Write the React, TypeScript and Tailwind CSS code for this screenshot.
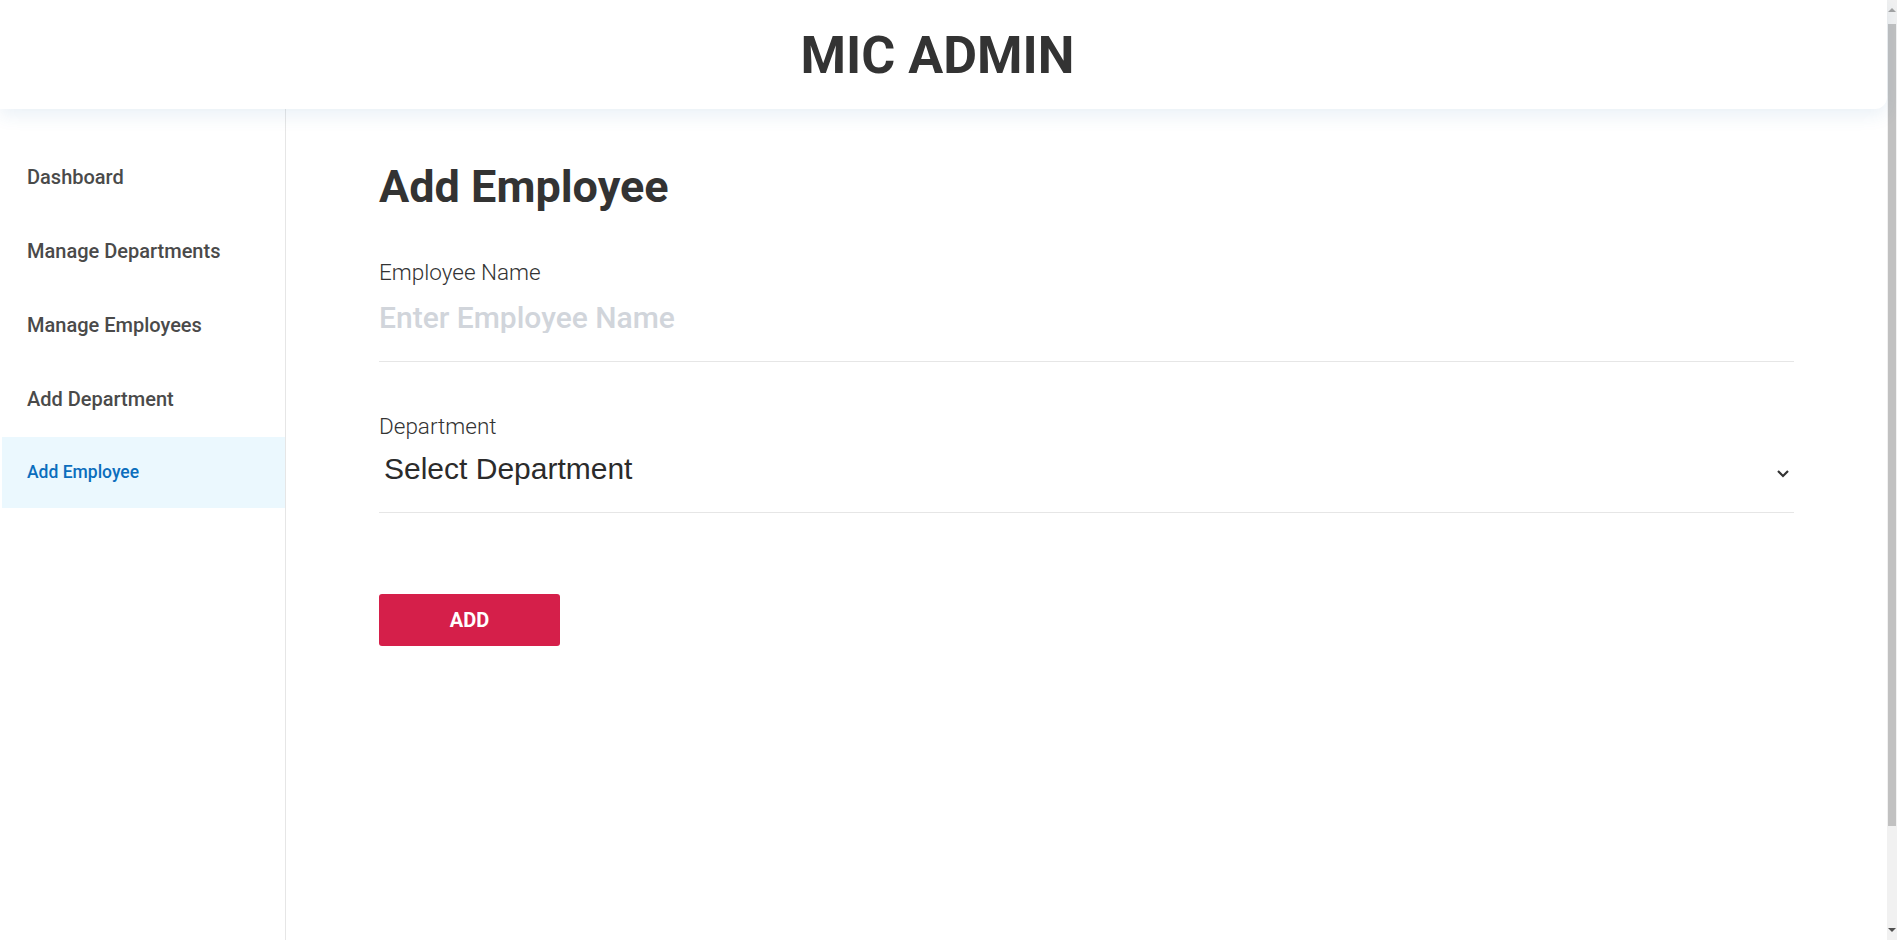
import React from "react";

const navItems = [
  { label: "Dashboard", active: false },
  { label: "Manage Departments", active: false },
  { label: "Manage Employees", active: false },
  { label: "Add Department", active: false },
  { label: "Add Employee", active: true },
];

export default function App() {
  return (
    <div className="flex h-[940px] w-full overflow-hidden bg-white font-['Roboto',sans-serif]">
      <div className="flex min-w-0 flex-1 flex-col">
        <header className="relative z-10 flex h-[109px] shrink-0 items-center justify-center rounded-br-[12px] bg-white pr-[12px] pt-[2px] shadow-[0_6px_18px_rgba(40,110,170,0.10)]">
          <h1 className="text-[52px] font-bold leading-none text-[#333333]">MIC ADMIN</h1>
        </header>
        <div className="flex min-h-0 flex-1">
          <aside className="w-[286px] shrink-0 border-r border-[#e6e6e6] pt-[32px]">
            {navItems.map((item) => (
              <div
                key={item.label}
                className={
                  item.active
                    ? "mb-[3px] ml-[2px] flex h-[71px] items-center bg-[#ebf8fe] pl-[25px] text-[17.5px] font-medium text-[#0b6ebd]"
                    : "mb-[3px] ml-[2px] flex h-[71px] items-center pl-[25px] text-[20px] font-medium text-[#4a4a4a]"
                }
              >
                {item.label}
              </div>
            ))}
          </aside>
          <main className="min-w-0 flex-1 px-[93px] pt-[55px]">
            <h2 className="text-[45px] font-bold leading-none text-[#333333]">Add Employee</h2>
            <div className="mt-[52px] border-b border-[#e6e6e6] pb-[28px]">
              <label className="block text-[22.5px] font-light leading-none text-[#333333]">Employee Name</label>
              <input
                className="mt-[19px] block h-[30px] w-full bg-transparent p-0 font-['Roboto',sans-serif] text-[30px] font-medium leading-none text-[#333333] outline-none placeholder:text-[#d1d5db]"
                placeholder="Enter Employee Name"
              />
            </div>
            <div className="mt-[53px] border-b border-[#e6e6e6] pb-[28px]">
              <label className="block text-[22.5px] font-light leading-none text-[#333333]">Department</label>
              <div className="mt-[17px] flex h-[30px] items-center justify-between">
                <span className="pl-[5px] font-['Liberation_Sans',Arial,sans-serif] text-[30px] leading-none text-[#2b2b2b]">
                  Select Department
                </span>
                <svg width="14" height="9" viewBox="0 0 14 9" className="mr-[4px] mt-[9px]">
                  <path d="M2 2 L7 7 L12 2" fill="none" stroke="#333" strokeWidth="2.2" />
                </svg>
              </div>
            </div>
            <button className="mt-[81px] flex h-[52px] w-[181px] items-center justify-center rounded-[3px] bg-[#d51f4a] text-[20px] font-bold leading-none text-white">
              ADD
            </button>
          </main>
        </div>
      </div>
      <div className="flex w-[10px] shrink-0 flex-col items-center bg-[#f1f1f1]">
        <div className="flex h-[20px] w-full items-center justify-center">
          <div className="h-0 w-0 border-x-[4px] border-b-[4px] border-x-transparent border-b-[#a3a3a3]" />
        </div>
        <div className="mt-[4px] h-[802px] w-[8px] bg-[#c1c1c1]" />
        <div className="flex-1" />
        <div className="flex h-[20px] w-full items-center justify-center">
          <div className="h-0 w-0 border-x-[4px] border-t-[4px] border-x-transparent border-t-[#505050]" />
        </div>
      </div>
    </div>
  );
}
